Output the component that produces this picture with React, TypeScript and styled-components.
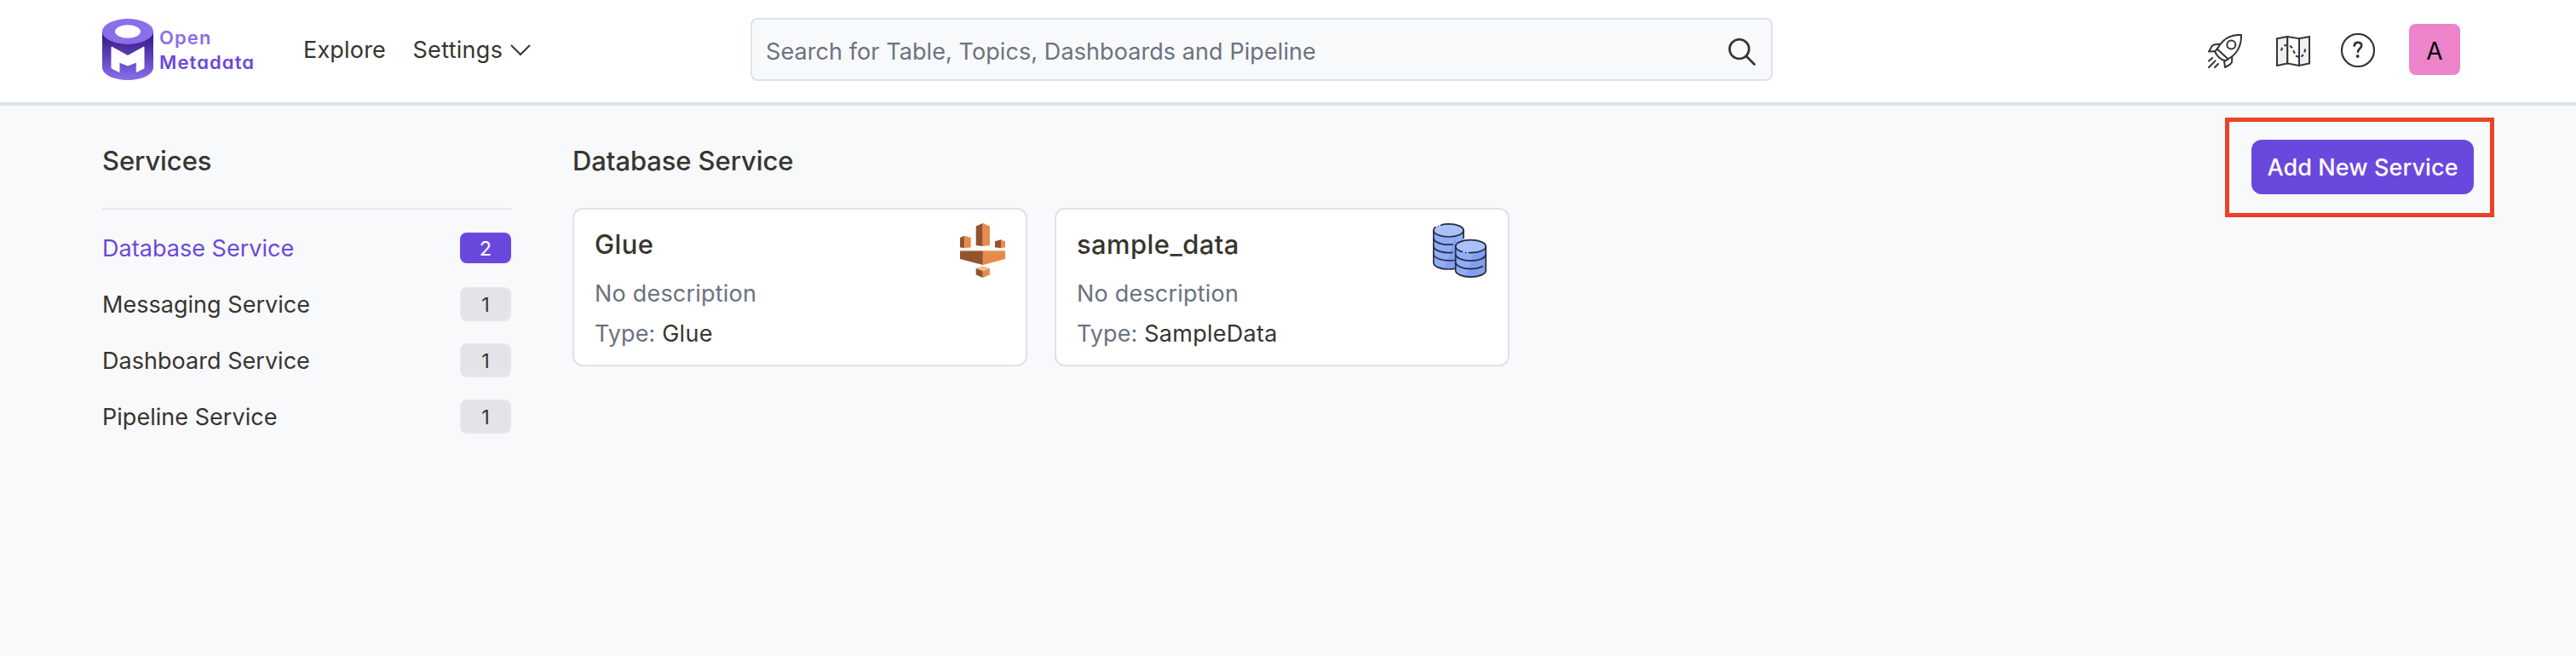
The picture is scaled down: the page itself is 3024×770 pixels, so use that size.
import React from 'react';
import styled, { createGlobalStyle } from 'styled-components';

const color = {
  text: '#37352f',
  muted: '#6b7280',
  primary: '#6b48dd',
  line: '#dce3eb',
  page: '#f8f9fb',
};

const GlobalStyle = createGlobalStyle`
  *, *::before, *::after { box-sizing: border-box; }
  body {
    margin: 0;
    background: ${color.page};
    color: ${color.text};
    font-family: Inter, "Liberation Sans", sans-serif;
    font-size: 27px;
    letter-spacing: 0.03px;
  }
  svg { display: block; flex: none; }
`;

const Page = styled.div`
  min-height: 770px;
  background: ${color.page};
`;

const Header = styled.header`
  display: flex;
  align-items: center;
  height: 124px;
  padding: 0 136px 4px 120px;
  background: #fff;
  border-bottom: 4px solid ${color.line};
`;

const HeaderStart = styled.div`
  display: flex;
  align-items: center;
  width: 761px;
`;

const Brand = styled.div`
  display: flex;
  align-items: center;
  gap: 7px;
  width: 236px;
`;

const Wordmark = styled.div`
  display: flex;
  flex-direction: column;
  margin-top: 1px;
  font-size: 22px;
  line-height: 29px;
  font-weight: 600;
  font-feature-settings: 'cv11';
`;

const WordmarkLine = styled.span<{ $tone: string; $spacing: number }>`
  color: ${(p) => p.$tone};
  letter-spacing: ${(p) => p.$spacing}px;
`;

const NavItem = styled.a<{ $spacing: number; $width?: number }>`
  display: flex;
  align-items: center;
  gap: 9px;
  width: ${(p) => (p.$width ? `${p.$width}px` : 'auto')};
  padding-top: 2px;
  line-height: 40px;
  letter-spacing: ${(p) => p.$spacing}px;
`;

const SearchBox = styled.div`
  display: flex;
  align-items: center;
  justify-content: space-between;
  width: 1200px;
  height: 74px;
  padding: 0 18px 0 16px;
  border: 2px solid ${color.line};
  border-radius: 8px;
  background: ${color.page};
`;

const Placeholder = styled.span`
  padding-top: 6px;
  color: ${color.muted};
  line-height: 40px;
  letter-spacing: 0.08px;
`;

const HeaderIcons = styled.div`
  display: flex;
  align-items: center;
  margin-left: auto;
`;

const IconSlot = styled.span<{ $gap: number; $drop: number }>`
  margin-right: ${(p) => p.$gap}px;
  padding-top: ${(p) => p.$drop}px;
`;

const Avatar = styled.div`
  display: flex;
  align-items: center;
  justify-content: center;
  width: 60px;
  height: 60px;
  padding-top: 4px;
  border-radius: 8px;
  background: #ec83cb;
  color: #000;
  font-size: 28px;
`;

const Body = styled.main`
  display: flex;
  align-items: flex-start;
  gap: 72px;
  padding: 40px 120px 0;
`;

const Sidebar = styled.aside`
  width: 480px;
`;

const Heading = styled.h1`
  margin: 0;
  font-size: 31px;
  line-height: 50px;
  font-weight: 500;
  letter-spacing: -0.1px;
`;

const Rule = styled.hr`
  height: 2px;
  margin: 30px 0 12px;
  border: 0;
  background: #e4e7eb;
`;

const ServiceRow = styled.div<{ $active?: boolean }>`
  display: flex;
  align-items: center;
  justify-content: space-between;
  height: 66px;
  color: ${(p) => (p.$active ? color.primary : color.text)};
`;

const Count = styled.span<{ $active?: boolean }>`
  display: flex;
  align-items: center;
  justify-content: center;
  width: 60px;
  height: ${(p) => (p.$active ? 36 : 40)}px;
  border: ${(p) => (p.$active ? 'none' : '2px solid #e6e7ea')};
  border-radius: 8px;
  background: ${(p) => (p.$active ? color.primary : '#e3e4e8')};
  color: ${(p) => (p.$active ? '#fff' : color.text)};
  font-size: 23.5px;
`;

const Content = styled.section`
  flex: 1;
`;

const ContentHeader = styled.div`
  display: flex;
  align-items: flex-start;
  justify-content: space-between;
  margin-bottom: 16px;
`;

const ButtonWrap = styled.div`
  position: relative;
`;

const Highlight = styled.div`
  position: absolute;
  inset: -26px -24px -27px -31px;
  border: 5px solid #ea4226;
  pointer-events: none;
`;

const PrimaryButton = styled.button`
  display: block;
  width: 261px;
  height: 64px;
  padding: 1px 0 0;
  border: 0;
  border-radius: 12px;
  background: ${color.primary};
  color: #fff;
  font: 500 27px/63px Inter, 'Liberation Sans', sans-serif;
  letter-spacing: 0.09px;
  white-space: nowrap;
`;

const CardGrid = styled.div`
  display: grid;
  grid-template-columns: repeat(4, 1fr);
  gap: 32px;
`;

const Card = styled.article`
  display: flex;
  justify-content: space-between;
  height: 186px;
  padding: 16px 24px;
  border: 2px solid ${color.line};
  border-radius: 12px;
  background: #fff;
`;

const CardTitle = styled.h2`
  margin: 0 0 14px;
  font-size: 31px;
  line-height: 49px;
  font-weight: 500;
  letter-spacing: 0.4px;
`;

const CardLine = styled.p<{ $spacing: number }>`
  margin: 0 0 7px;
  color: ${color.muted};
  line-height: 40px;
  letter-spacing: ${(p) => p.$spacing}px;
`;

const TypeName = styled.span`
  color: ${color.text};
  letter-spacing: 0.28px;
`;

const LogoMark = () => (
  <svg width="60" height="72" viewBox="0 0 60 72">
    <defs>
      <linearGradient id="drum" x1="0" y1="20" x2="0" y2="72" gradientUnits="userSpaceOnUse">
        <stop offset="0" stopColor="#371b88" />
        <stop offset="1" stopColor="#8a6eec" />
      </linearGradient>
    </defs>
    <path d="M0 15V57C0 65.500 13.500 72 30 72S60 65.500 60 57V15Z" fill="url(#drum)" />
    <ellipse cx="30" cy="15" rx="30" ry="15" fill="#8a6eea" />
    <ellipse cx="30" cy="15" rx="15" ry="7.700" fill="#fff" />
    <path
      d="M11 33 30 43.500 49 33V58L40.300 62.500V51L30 55 20 51V62.500L11 58Z"
      fill="#fff"
      stroke="#fff"
      strokeWidth="1"
      strokeLinejoin="round"
    />
  </svg>
);

const Chevron = () => (
  <svg width="24" height="14" viewBox="0 0 24 14" fill="none" stroke={color.text} strokeWidth="2">
    <path d="M1.500 1.500 12 12 22.500 1.500" strokeLinecap="round" />
  </svg>
);

const SearchIcon = () => (
  <svg width="32" height="32" viewBox="0 0 32 32" fill="none" stroke={color.text} strokeWidth="2.700">
    <circle cx="12.800" cy="12.600" r="11.400" />
    <path d="M20.800 20.800 30.500 30.500" strokeLinecap="round" />
  </svg>
);

const RocketIcon = () => (
  <svg
    width="40"
    height="40"
    viewBox="0 0 40 40"
    fill="none"
    stroke={color.text}
    strokeWidth="2"
    strokeLinejoin="round"
    strokeLinecap="round"
  >
    <path d="M39 1C30 .5 23 3 18 8 15 11 12.500 14 10.700 17.500L23.500 29.300C27 27.500 30.500 25 33 21.500 37.500 15.500 39.300 9 39 1Z" />
    <path d="M10.700 17.500 8.200 20.300C9 24.500 15.500 30.700 20.500 31.300L23.500 29.300" />
    <circle cx="27.300" cy="12.500" r="5" />
    <path d="M14 11.800 7.500 12.300 5 13.600 1 20.400 8.300 20.300" />
    <path d="M28.300 26.500 28 33 26 35.700 20 39 19 31.500" />
    <path d="M1 31.600 5.200 27.900M1 39 8.600 31.400M8 39 12 35" />
  </svg>
);

const MapIcon = () => (
  <svg width="40" height="36" viewBox="0 0 40 36" fill="none" stroke={color.text} strokeWidth="2">
    <path d="M27 3.300 39 1V32.500L27 35Z" fill="#efeff5" />
    <path d="M1 3.300 13.300 1V32.500L1 35Z" fill="#efeff5" />
    <path d="M13.300 1 27 3.300V35L13.300 32.500Z" fill="#fff" />
    <path d="M5.800 17.500 7.200 13.800M9.300 11.700Q10.500 11 12 11M16.200 11.800 19 14.300M20 17.300 22 20.800M23 23.500 27 25.200M29.500 24.600 32 22.300M33.300 19.500 34.200 15.500" />
  </svg>
);

const HelpIcon = () => (
  <svg width="40" height="40" viewBox="0 0 40 40" fill="none" stroke={color.text}>
    <circle cx="20" cy="20" r="19" strokeWidth="2.200" />
    <path
      d="M15.800 14.600C16 12 17.700 10.900 20 10.900 22.500 10.900 24.200 12.300 24.200 14.600 24.200 18 20 18 20 21.800"
      strokeWidth="2.700"
      strokeLinecap="round"
    />
    <circle cx="19.700" cy="27" r="1.900" fill={color.text} stroke="none" />
  </svg>
);

const GlueIcon = () => (
  <svg width="53" height="64" viewBox="0 0 53 64">
    <path d="M18.700 3.500 26.700 0V27L18.700 26Z" fill="#94532f" />
    <path d="M34.900 3.500 26.700 0V27L34.900 26Z" fill="#e78b4a" />
    <path d="M0 17 5.200 14.800V29L0 28.500Z" fill="#94532f" />
    <path d="M12.700 17 5.200 14.800V29L12.700 28.500Z" fill="#e78b4a" />
    <path d="M41 21.200 48 19.200V29L41 28.500Z" fill="#94532f" />
    <path d="M53 21.200 48 19.200V29L53 28.500Z" fill="#e78b4a" />
    <path d="M0 32.500H26.900V49L0 42Z" fill="#94532f" />
    <path d="M26.900 32.500H53V42L26.900 49Z" fill="#e78b4a" />
    <path d="M0 31.800H26.900V32.800H0Z" fill="#d6a183" />
    <path d="M26.900 31.800H53V32.800H26.900Z" fill="#f2b88f" />
    <path d="M18.700 52.800 26.800 56V64L18.700 60.500Z" fill="#94532f" />
    <path d="M34.900 52.800 26.800 56V64L34.900 60.500Z" fill="#e78b4a" />
    <path d="M18.700 52.800 26.800 50.200 34.900 52.800 26.800 56Z" fill="#f3bc95" />
  </svg>
);

const DatabaseIcon = () => (
  <svg
    width="64"
    height="64"
    viewBox="0 0 64 64"
    fill="none"
    stroke="#2b2b3a"
    strokeWidth="1.700"
    strokeLinecap="round"
  >
    <path d="M1 8.500V46.500C1 50.500 9 53.700 18.700 53.700S36 50.500 36 46.500V8.500Z" fill="#8fadf8" stroke="none" />
    <path d="M22 29 14 53.500Q21 54 27 52V17Z" fill="#82a0f2" stroke="none" />
    <ellipse cx="18.500" cy="8.700" rx="17.300" ry="7.600" fill="#a9c1fb" stroke="none" />
    <path d="M9.500 2.300Q13.500 .9 18.500 .9C28.500 .9 36.100 4.300 36.100 8.500S28.500 16 18.500 16 .9 12.700 .9 8.500Q.9 6 3.200 4.600" />
    <circle cx="6.400" cy="3.200" r=".6" fill="#2b2b3a" stroke="none" />
    <path d="M.9 8.500V46.500C.9 50.800 8.500 54 18.500 54Q22.300 54 25.500 53.300M36.100 8.500V17.500" />
    <path d="M.9 18C2 22.500 11 26.200 23 24.900M.9 27.500C2 32 12 35.700 23 34.300M.9 37C3 41.500 12 45 25.500 43.500" />
    <path d="M26.700 26.500V55.500C26.700 59.700 34.700 63 44.600 63S62.300 59.700 62.300 55.500V26.500Z" fill="#8fadf8" stroke="none" />
    <path d="M48 34.500 39 62.500Q55 64 62 57V31Q58 34 48 34.500Z" fill="#82a0f2" stroke="none" />
    <ellipse cx="44.500" cy="27" rx="17.700" ry="7.600" fill="#a9c1fb" stroke="none" />
    <path d="M34.500 33.500C29.800 32 26.700 29.800 26.700 27.200 26.700 23 34.700 19.700 44.500 19.700S62.300 23 62.300 27.200 54.500 34.700 44.500 34.700H42.700" />
    <circle cx="38.700" cy="34.400" r=".8" fill="#2b2b3a" stroke="none" />
    <path d="M26.700 27V55.500C26.700 59.700 34.700 63.100 44.500 63.100S62.300 59.700 62.300 55.500V27" />
    <path d="M26.700 36.500C27.500 41 35 44.200 44.500 44.200S61.500 41 62.300 36.500M26.700 46C27.500 50.500 35 53.600 44.500 53.600Q53 53.600 58.500 50.500" />
  </svg>
);

const services = [
  { name: 'Database Service', count: 2, active: true },
  { name: 'Messaging Service', count: 1 },
  { name: 'Dashboard Service', count: 1 },
  { name: 'Pipeline Service', count: 1 },
];

const cards = [
  { name: 'Glue', type: 'Glue', icon: <GlueIcon /> },
  { name: 'sample_data', type: 'SampleData', icon: <DatabaseIcon /> },
];

export default function App() {
  return (
    <Page>
      <GlobalStyle />
      <Header>
        <HeaderStart>
          <Brand>
            <LogoMark />
            <Wordmark>
              <WordmarkLine $tone="#8a6eea" $spacing={1.1}>Open</WordmarkLine>
              <WordmarkLine $tone={color.primary} $spacing={1.1}>Metadata</WordmarkLine>
            </Wordmark>
          </Brand>
          <NavItem $spacing={0.18} $width={128.5}>Explore</NavItem>
          <NavItem $spacing={0.3}>
            Settings
            <Chevron />
          </NavItem>
        </HeaderStart>
        <SearchBox>
          <Placeholder>Search for Table, Topics, Dashboards and Pipeline</Placeholder>
          <IconSlot $gap={0} $drop={6}><SearchIcon /></IconSlot>
        </SearchBox>
        <HeaderIcons>
          <IconSlot $gap={40} $drop={4}><RocketIcon /></IconSlot>
          <IconSlot $gap={36} $drop={4}><MapIcon /></IconSlot>
          <IconSlot $gap={40} $drop={2}><HelpIcon /></IconSlot>
          <Avatar>A</Avatar>
        </HeaderIcons>
      </Header>
      <Body>
        <Sidebar>
          <Heading>Services</Heading>
          <Rule />
          {services.map((s) => (
            <ServiceRow key={s.name} $active={s.active}>
              {s.name}
              <Count $active={s.active}>{s.count}</Count>
            </ServiceRow>
          ))}
        </Sidebar>
        <Content>
          <ContentHeader>
            <Heading>Database Service</Heading>
            <ButtonWrap>
              <PrimaryButton>Add New Service</PrimaryButton>
              <Highlight />
            </ButtonWrap>
          </ContentHeader>
          <CardGrid>
            {cards.map((c) => (
              <Card key={c.name}>
                <div>
                  <CardTitle>{c.name}</CardTitle>
                  <CardLine $spacing={0.2}>No description</CardLine>
                  <CardLine $spacing={0.1}>
                    Type: <TypeName>{c.type}</TypeName>
                  </CardLine>
                </div>
                {c.icon}
              </Card>
            ))}
          </CardGrid>
        </Content>
      </Body>
    </Page>
  );
}
